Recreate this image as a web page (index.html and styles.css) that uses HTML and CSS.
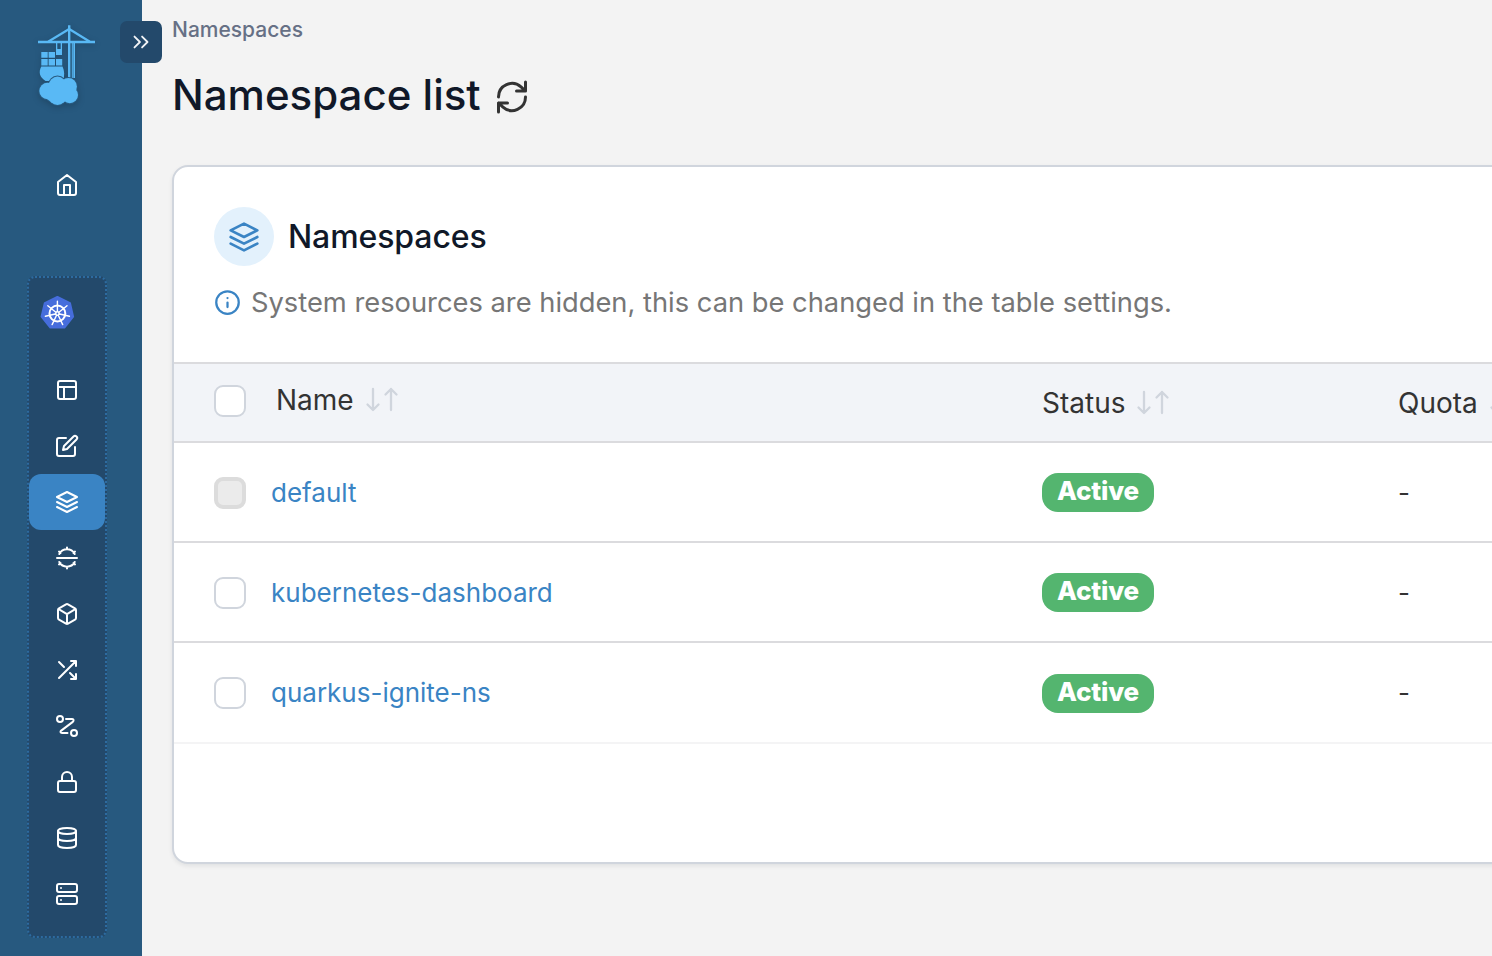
FILE: index.html
```html
<!DOCTYPE html>
<html lang="en">
<head>
<meta charset="utf-8">
<title>Namespace list</title>
<link rel="stylesheet" href="styles.css">
</head>
<body>
<svg class="defs" width="0" height="0">
  <symbol id="layers" viewBox="0 0 24 24"><path d="M12 2 2 7l10 5 10-5-10-5zM2 17l10 5 10-5M2 12l10 5 10-5"/></symbol>
  <symbol id="sort" viewBox="0 0 34 28"><path d="M8 3v21M2.500 18.500l5.500 5.500 5.500-5.500M26 24V3M20.500 8.500l5.500-5.500 5.500 5.500"/></symbol>
  <g id="cloud"><circle cx="21.500" cy="61.300" r="8.700"/><circle cx="32.500" cy="62.500" r="8.400"/><circle cx="33.800" cy="71" r="8.200"/><circle cx="21.500" cy="72" r="9"/><circle cx="11.500" cy="67" r="8.200"/><path d="M9 60.500 15 58h15l10 7v6l-12 7H15l-4-3z"/></g>
</svg>
<div class="app">
  <aside class="sidebar">
    <svg class="logo" viewBox="0 0 62 86">
      <g fill="#59b9f5">
        <path d="M2 16.700h57v2.500H2zM32 1.300h2.400v53H32zM35.800 18h1v36h-1zM37.300 18h1.700v36h-1.700z"/>
        <path d="M33.200 5 53.500 17.500M33.200 5 12.500 17.500" fill="none" stroke="#59b9f5" stroke-width="2.200"/>
        <path d="M20 19h1.300v6h3.400v-6H26v12h-6z"/>
        <path d="M5.300 28h6.400v5.700H5.300zM12.600 28H19v5.700h-6.400zM5.300 35h6.400v6.500H5.300zM12.600 35H19v6.500h-6.400zM20 35h6.200v6.500H20z"/>
        <path d="M5.300 42.500H26.500c2 4 2.300 9 .5 14.500H9.500C4 53.500 2 48.500 5.300 42.500z"/>
        <use href="#cloud" stroke="#27597f" stroke-width="2"/>
        <use href="#cloud"/>
      </g>
    </svg>
    <button class="toggle" aria-label="Expand"><svg viewBox="0 0 24 24"><path d="m6 17 5-5-5-5M13 17l5-5-5-5"/></svg></button>
    <a class="item home"><svg viewBox="0 0 24 24"><path d="m3 9 9-7 9 7v11a2 2 0 0 1-2 2H5a2 2 0 0 1-2-2zM9 22V12h6v10"/></svg></a>
    <nav class="group">
      <div class="env">
        <svg viewBox="0 0 36 36">
          <path fill="#466ddc" stroke="#466ddc" stroke-width="2" stroke-linejoin="round" d="m18.400 2 12.600 6.100 3.100 13.500-8.700 11H11.400l-8.800-11L5.800 8.100z"/>
          <g fill="none" stroke="#fff" stroke-width="2"><circle cx="18.400" cy="18.500" r="7.900"/>
          <path stroke-width="1.400" d="M18.400 18.500V6.200M18.400 18.500l9.600-7.700M18.400 18.500l12 2.800M18.400 18.500l5.300 11.100M18.400 18.500l-5.300 11.100M18.400 18.500l-12 2.800M18.400 18.500 8.800 10.800"/></g>
          <circle cx="18.400" cy="18.500" r="2.400" fill="#fff"/><circle cx="18.400" cy="18.500" r=".9" fill="#466ddc"/>
        </svg>
      </div>
      <a class="item"><svg viewBox="0 0 24 24"><rect x="3" y="3" width="18" height="18" rx="2"/><path d="M3 9h18M9 21V9"/></svg></a>
      <a class="item"><svg viewBox="0 0 24 24"><path d="M11 4H4a2 2 0 0 0-2 2v14a2 2 0 0 0 2 2h14a2 2 0 0 0 2-2v-7M18.500 2.500a2.120 2.120 0 0 1 3 3L12 15l-4 1 1-4z"/></svg></a>
      <a class="item active"><svg><use href="#layers"/></svg></a>
      <a class="item"><svg viewBox="0 0 24 24"><path d="M2 12h20M4.300 8a8.700 8.700 0 0 1 15.400 0M4.300 16a8.700 8.700 0 0 0 15.400 0M12 3.300V1.500M12 20.700v1.800M5.500 7 4 5.600M18.500 7 20 5.600M5.500 17 4 18.400M18.500 17l1.500 1.400"/></svg></a>
      <a class="item"><svg viewBox="0 0 24 24"><path d="M21 16V8a2 2 0 0 0-1-1.730l-7-4a2 2 0 0 0-2 0l-7 4A2 2 0 0 0 3 8v8a2 2 0 0 0 1 1.730l7 4a2 2 0 0 0 2 0l7-4A2 2 0 0 0 21 16zM3.270 6.960 12 12.010l8.730-5.050M12 22.080V12"/></svg></a>
      <a class="item"><svg viewBox="0 0 24 24"><path d="M16 3h5v5M4 20 21 3M21 16v5h-5M15 15l6 6M4 4l5 5"/></svg></a>
      <a class="item"><svg viewBox="0 0 24 24"><circle cx="5" cy="5" r="3"/><circle cx="19" cy="19" r="3"/><path d="M11 5h6.200c1.600 0 1.800 1.700.6 2.900L6.200 16.600C5 17.700 5.400 19 7 19h5.500"/></svg></a>
      <a class="item"><svg viewBox="0 0 24 24"><rect x="3" y="11" width="18" height="11" rx="2"/><path d="M7 11V7a5 5 0 0 1 10 0v4"/></svg></a>
      <a class="item"><svg viewBox="0 0 24 24"><ellipse cx="12" cy="5" rx="9" ry="3"/><path d="M21 12c0 1.660-4 3-9 3s-9-1.340-9-3M3 5v14c0 1.660 4 3 9 3s9-1.340 9-3V5"/></svg></a>
      <a class="item"><svg viewBox="0 0 24 24"><rect x="2" y="2" width="20" height="8" rx="2"/><rect x="2" y="14" width="20" height="8" rx="2"/><path d="M6 6h.01M6 18h.01"/></svg></a>
    </nav>
  </aside>
  <main class="main">
    <div class="crumb">Namespaces</div>
    <div class="title"><h1>Namespace list</h1><svg class="refresh" viewBox="0 0 24 24"><path d="M21 2v6h-6M3 12a9 9 0 0 1 15-6.700L21 8M3 22v-6h6M21 12a9 9 0 0 1-15 6.700L3 16"/></svg></div>
    <section class="card">
      <header class="card-head">
        <div class="heading"><span class="bubble"><svg><use href="#layers"/></svg></span><h2>Namespaces</h2></div>
        <div class="info"><svg viewBox="0 0 24 24"><circle cx="12" cy="12" r="10"/><path d="M12 16v-4M12 8h.01"/></svg><span>System resources are hidden, this can be changed in the table settings.</span></div>
      </header>
      <div class="row thead">
        <div class="cell first"><span class="check"></span><span class="label">Name</span><svg class="sort"><use href="#sort"/></svg></div>
        <div class="cell drop"><span class="label">Status</span><svg class="sort"><use href="#sort"/></svg></div>
        <div class="cell drop"><span class="label">Quota</span><svg class="sort"><use href="#sort"/></svg></div>
      </div>
      <div class="row"><div class="cell first"><span class="check disabled"></span><a class="link">default</a></div><div class="cell"><span class="badge">Active</span></div><div class="cell">-</div></div>
      <div class="row"><div class="cell first"><span class="check"></span><a class="link">kubernetes-dashboard</a></div><div class="cell"><span class="badge">Active</span></div><div class="cell">-</div></div>
      <div class="row last"><div class="cell first"><span class="check"></span><a class="link">quarkus-ignite-ns</a></div><div class="cell"><span class="badge">Active</span></div><div class="cell">-</div></div>
    </section>
  </main>
</div>
</body>
</html>
```
FILE: styles.css
```css
* { box-sizing: border-box; }
body { margin: 0; font-family: Inter, sans-serif; background: #f3f3f3; color: #333; overflow: hidden; }
svg { display: block; fill: none; stroke: currentColor; stroke-width: 2; stroke-linecap: round; stroke-linejoin: round; flex: none; }
.defs { position: absolute; }
.app { display: flex; height: 956px; width: 1492px; overflow: hidden; }
.sidebar { position: relative; flex: none; width: 142px; background: #27597f; color: #fff; display: flex; flex-direction: column; padding: 24px 35px 18px 27px; }
.logo { width: 62px; height: 86px; margin-left: 9px; stroke: none; filter: drop-shadow(0 2px 3px rgba(0, 0, 0, .18)); }
.toggle { position: absolute; left: 120px; top: 21px; width: 42px; height: 42px; border: 0; border-radius: 7px; background: #23496b; color: #f2f4f7; padding: 0; display: flex; align-items: center; justify-content: center; }
.toggle svg { width: 26px; height: 26px; stroke-width: 1.7; }
.item { width: 76px; height: 56px; border-radius: 12px; display: flex; align-items: center; justify-content: center; flex: none; }
.item svg { width: 24px; height: 24px; }
.home { margin: 47px 0 0 2px; }
.group { margin-top: 63px; width: 80px; height: 662px; flex: none; background: #23496b; border: 2px dotted #2d6ba0; border-radius: 8px; }
.env { height: 84px; padding: 17px 0 0 10px; }
.env svg { width: 36px; height: 36px; stroke: none; }
.active { background: #3a84c4; }
.main { flex: 1; min-width: 0; padding: 15px 0 0 30px; }
.crumb { font-size: 21px; line-height: 30px; font-weight: 500; color: #667085; white-space: nowrap; }
.title { display: flex; align-items: center; margin-top: 23px; height: 54px; gap: 13px; }
h1 { margin: 0; font-size: 42px; line-height: 54px; font-weight: 500; color: #101828; white-space: nowrap; }
.refresh { width: 36px; height: 36px; margin-top: 4px; color: #333; }
.card { width: 1500px; height: 699px; margin-top: 43px; background: #fff; border: 2px solid #d0d5dd; border-radius: 16px; box-shadow: 0 2px 4px rgba(16, 24, 40, .08); overflow: hidden; }
.card-head { height: 195px; padding: 40px 0 0 40px; }
.heading { display: flex; align-items: center; gap: 14px; height: 59px; }
.bubble { width: 60px; height: 59px; border-radius: 50%; background: #e3f1fc; color: #3a84c4; display: flex; align-items: center; justify-content: center; }
.bubble svg { width: 32px; height: 32px; }
h2 { margin: 0; padding-top: 1px; font-size: 32px; letter-spacing: -.1px; line-height: 40px; font-weight: 500; color: #101828; }
.info { display: flex; align-items: center; gap: 10px; margin-top: 16px; height: 40px; font-size: 27.3px; color: #767676; white-space: nowrap; }
.info svg { width: 27px; height: 27px; color: #3a84c4; }
.row { display: grid; grid-template-columns: 868px 356px 1fr; height: 100px; border-bottom: 2px solid #dbdbde; font-size: 26px; }
.row.last { height: 101px; border-bottom-color: #f4f4f5; }
.thead { height: 81px; border-top: 2px solid #dbdbde; background: #f2f4f8; font-size: 28px; }
.cell { display: flex; align-items: center; white-space: nowrap; }
.first { padding-left: 40px; }
.thead .first { padding-bottom: 5px; }
.drop { padding-top: 1px; }
.check { width: 32px; height: 32px; border: 2px solid #d0d5dd; border-radius: 9px; background: #fff; margin: 1px 25px 0 0; flex: none; }
.last .check { margin-top: 0; }
.thead .check { margin-right: 30px; }
.disabled { border: 4px solid #dcdcdc; background: #ebebeb; }
.sort { width: 34px; height: 28px; margin-left: 11px; color: #d0d5dd; stroke-width: 2.300; }
.link { color: #3a84c4; }
.badge { height: 39px; width: 112px; border-radius: 16px; background: #54b56f; color: #fff; font-weight: 800; font-size: 26px; letter-spacing: -.2px; line-height: 36px; text-align: center; }
.last .badge { margin-top: 1px; }
```
